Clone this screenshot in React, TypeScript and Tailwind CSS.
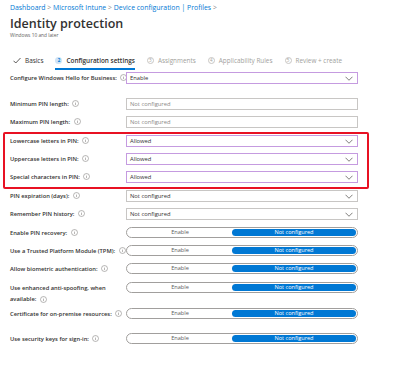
import React from "react";

type Row = {
  label: string;
  kind: "select" | "input" | "toggle";
  value?: string;
  mt: number;
  purple?: boolean;
  chevron?: boolean;
};

const rows: Row[] = [
  { label: "Configure Windows Hello for Business:", kind: "select", value: "Enable", mt: 0, purple: true, chevron: true },
  { label: "Minimum PIN length:", kind: "input", value: "Not configured", mt: 14 },
  { label: "Maximum PIN length:", kind: "input", value: "Not configured", mt: 6 },
  { label: "Lowercase letters in PIN:", kind: "select", value: "Allowed", mt: 7, purple: true, chevron: true },
  { label: "Uppercase letters in PIN:", kind: "select", value: "Allowed", mt: 6, purple: true, chevron: true },
  { label: "Special characters in PIN:", kind: "select", value: "Allowed", mt: 6, purple: true, chevron: true },
  { label: "PIN expiration (days):", kind: "select", value: "Not configured", mt: 7, chevron: true },
  { label: "Remember PIN history:", kind: "select", value: "Not configured", mt: 6, chevron: true },
  { label: "Enable PIN recovery:", kind: "toggle", mt: 7 },
  { label: "Use a Trusted Platform Module (TPM):", kind: "toggle", mt: 6 },
  { label: "Allow biometric authentication:", kind: "toggle", mt: 6 },
  { label: "Use enhanced anti-spoofing, when available:", kind: "toggle", mt: 7 },
  { label: "Certificate for on-premise resources:", kind: "toggle", mt: 14 },
  { label: "Use security keys for sign-in:", kind: "toggle", mt: 13 },
];

function Info() {
  return (
    <svg width="7" height="7" viewBox="0 0 14 14" className="inline-block shrink-0 align-middle ml-[2px]">
      <circle cx="7" cy="7" r="6" fill="none" stroke="#8a8886" strokeWidth="1.2" />
      <rect x="6.4" y="6" width="1.2" height="4.2" fill="#8a8886" />
      <circle cx="7" cy="4.2" r="0.8" fill="#8a8886" />
    </svg>
  );
}

function Chevron() {
  return (
    <svg width="8" height="5" viewBox="0 0 16 10" className="shrink-0">
      <path d="M1 1.5 L8 8.5 L15 1.5" fill="none" stroke="#605e5c" strokeWidth="1.6" />
    </svg>
  );
}

function Step({ n, label, active }: { n: number; label: string; active?: boolean }) {
  return (
    <div className="flex flex-col">
      <div className="flex items-center gap-[4px] h-[13px]">
        <span
          className={
            active
              ? "w-[7px] h-[7px] rounded-full bg-[#cfe4f6] text-[#0078d4] text-[4.5px] font-bold flex items-center justify-center leading-none"
              : "w-[7px] h-[7px] rounded-full border border-[#c8c6c4] text-[#a19f9d] text-[4.5px] flex items-center justify-center leading-none"
          }
        >
          {n}
        </span>
        <span className={active ? "text-[#323130] font-semibold" : "text-[#a19f9d]"}>{label}</span>
      </div>
      <div className={active ? "h-[2px] bg-[#0078d4] mt-[1px]" : "h-[2px] mt-[1px]"} />
    </div>
  );
}

function Control({ row }: { row: Row }) {
  if (row.kind === "toggle") {
    return (
      <div className="w-[232px] h-[11px] rounded-full border border-[#a19f9d] flex items-stretch p-[1px] text-[5.6px]">
        <div className="flex-1 flex items-center justify-center text-[#605e5c]">Enable</div>
        <div className="w-[124px] rounded-full bg-[#0078d4] text-white flex items-center justify-center">
          Not configured
        </div>
      </div>
    );
  }
  return (
    <div
      className={
        "w-[232px] h-[12px] border flex items-center justify-between pl-[3px] pr-[4px] text-[5.8px] " +
        (row.purple ? "border-[#c59be0]" : "border-[#c8c6c4]") +
        (row.kind === "input" ? " text-[#8a8886]" : " text-[#323130]")
      }
    >
      <span>{row.value}</span>
      {row.chevron && <Chevron />}
    </div>
  );
}

export default function App() {
  return (
    <div
      className="w-[400px] h-[370px] bg-white overflow-hidden relative px-[10px]"
      style={{ fontFamily: '"Open Sans", "Noto Sans", sans-serif' }}
    >
      {/* breadcrumb */}
      <div className="pt-[4px] text-[6.9px] text-[#0078d4] leading-[8px] whitespace-nowrap">
        Dashboard <span className="text-[#8a8886]">&gt;</span> Microsoft Intune{" "}
        <span className="text-[#8a8886]">&gt;</span> Device configuration | Profiles{" "}
        <span className="text-[#8a8886]">&gt;</span>
      </div>
      <div className="mt-[4px] text-[12.5px] font-semibold text-[#323130] leading-[16px]">Identity protection</div>
      <div className="text-[4.8px] text-[#605e5c] leading-[7px]">Windows 10 and later</div>

      {/* steps */}
      <div className="mt-[15px] flex items-start gap-[12px] pl-[3px] text-[6.4px] whitespace-nowrap">
        <div className="flex flex-col">
          <div className="flex items-center gap-[4px] h-[13px] text-[#323130]">
            <svg width="8" height="7" viewBox="0 0 16 14">
              <path d="M1 7.5 L5.5 12 L15 2" fill="none" stroke="#323130" strokeWidth="1.6" />
            </svg>
            <span>Basics</span>
          </div>
        </div>
        <Step n={2} label="Configuration settings" active />
        <Step n={3} label="Assignments" />
        <Step n={4} label="Applicability Rules" />
        <Step n={5} label="Review + create" />
      </div>

      {/* settings */}
      <div className="mt-[2px] flex flex-col text-[5.75px] text-[#323130] font-semibold">
        {rows.map((row, i) => (
          <div key={i} className="flex items-start h-[12px]" style={{ marginTop: row.mt }}>
            <div className="w-[116px] leading-[11.5px] pt-[0.5px]">
              {row.label === "Use enhanced anti-spoofing, when available:" ? (
                <>
                  Use enhanced anti-spoofing, when
                  <br />
                  available: <Info />
                </>
              ) : (
                <span className="whitespace-nowrap">
                  {row.label} <Info />
                </span>
              )}
            </div>
            <div className="font-normal">
              <Control row={row} />
            </div>
          </div>
        ))}
      </div>

      {/* highlight */}
      <div className="absolute left-[3px] top-[132px] w-[366px] h-[57px] border-2 border-[#e81123] rounded-[2px] pointer-events-none" />
    </div>
  );
}
